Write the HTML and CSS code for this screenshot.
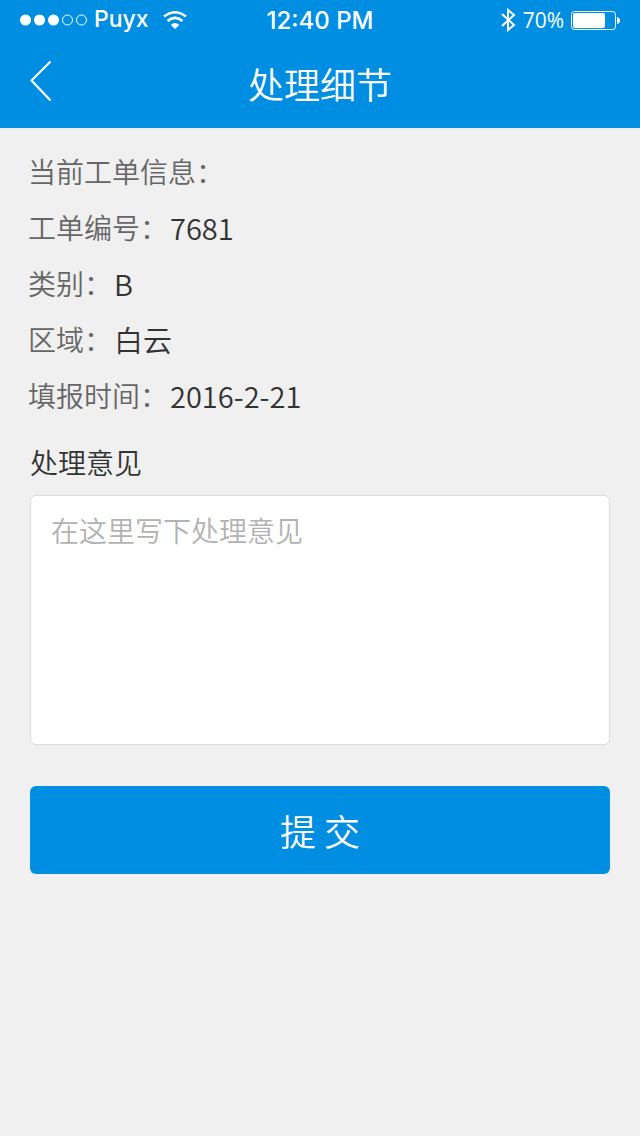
FILE: index.html
```html
<!DOCTYPE html>
<html lang="zh-CN">
<head>
<meta charset="utf-8">
<meta name="viewport" content="width=device-width, initial-scale=1">
<title>处理细节</title>
<link rel="stylesheet" href="styles.css">
</head>
<body>
<header class="top">
  <div class="status">
    <div class="status-left">
      <svg class="signal" width="68" height="12" viewBox="0 0 68 12" aria-hidden="true">
        <g fill="#fff"><circle cx="5.500" cy="6" r="5.500"/><circle cx="19.500" cy="6" r="5.500"/><circle cx="33.500" cy="6" r="5.500"/></g>
        <g fill="none" stroke="#fff"><circle cx="47.500" cy="6" r="5"/><circle cx="61.500" cy="6" r="5"/></g>
      </svg>
      <span class="carrier">Puyx</span>
      <svg class="wifi" width="24" height="18" viewBox="0 0 24 18" aria-hidden="true">
        <g fill="none" stroke="#fff" stroke-width="2.600"><path d="M1 5.500Q12-3 23 5.500"/><path d="M4.600 10Q12 3.800 19.400 10"/></g>
        <path d="M7.800 14Q12 10 16.200 14L12 18Z" fill="#fff"/>
      </svg>
    </div>
    <span class="clock">12:40 PM</span>
    <div class="status-right">
      <svg class="bluetooth" width="16" height="24" viewBox="0 0 16 24" aria-hidden="true"><path d="M1 6L13 17L7 22V2L13 7L1 18" fill="none" stroke="#fff" stroke-width="2"/></svg>
      <span class="percent">70%</span>
      <svg class="battery" width="50" height="20" viewBox="0 0 50 20" aria-hidden="true"><rect x="1.500" y="1.500" width="44" height="18" rx="3" fill="none" stroke="#fff"/><rect x="3" y="3" width="32" height="15" rx="2" fill="#fff"/><path d="M47 7Q50 8 50 10.500T47 14Z" fill="#fff"/></svg>
    </div>
  </div>
  <div class="nav">
    <button class="back" type="button" aria-label="返回"><svg width="22" height="42" viewBox="0 0 22 42" aria-hidden="true"><path d="M20.500 1.500L1.500 20.500L20.500 40.500" fill="none" stroke="#fff" stroke-width="2.200"/></svg></button>
    <h1 class="title">处理细节</h1>
  </div>
</header>
<main class="content">
  <h2 class="heading">当前工单信息：</h2>
  <dl class="info">
    <div class="row"><dt>工单编号：</dt><dd>7681</dd></div>
    <div class="row"><dt>类别：</dt><dd>B</dd></div>
    <div class="row"><dt>区域：</dt><dd>白云</dd></div>
    <div class="row"><dt>填报时间：</dt><dd>2016-2-21</dd></div>
  </dl>
  <form class="form">
    <label class="label" for="opinion">处理意见</label>
    <textarea class="opinion" id="opinion" placeholder="在这里写下处理意见"></textarea>
    <button class="submit" type="button">提 交</button>
  </form>
</main>
</body>
</html>
```
FILE: styles.css
```css
* { box-sizing: border-box; }
body {
  margin: 0;
  min-height: 100vh;
  background: #f0f0f0;
  color: #333;
  font-family: "Noto Sans CJK SC", sans-serif;
  font-weight: 350;
}
.top { background: #008ee3; color: #fff; }
.status {
  display: grid;
  grid-template-columns: 1fr auto 1fr;
  align-items: center;
  height: 40px;
  padding: 0 20px;
}
.status-left, .status-right { display: flex; align-items: center; gap: 6px; }
.status-right { justify-content: flex-end; }
.carrier { padding-bottom: 2px; font: 500 23px/36px Inter, sans-serif; }
.wifi { margin-left: 8px; }
.clock { padding-top: 2px; font: 500 24px/38px Inter, sans-serif; }
.percent { font: 400 21px/40px "Open Sans", sans-serif; }
.nav {
  display: grid;
  grid-template-columns: 60px 1fr 60px;
  align-items: center;
  height: 88px;
  padding: 0 20px 6px;
}
.back {
  display: flex;
  padding: 0 10px;
  border: 0;
  background: none;
}
.title { margin: 0; padding-top: 4px; text-align: center; font-size: 36px; font-weight: 350; line-height: 52px; }
.content { padding: 15px 28px; font-size: 28px; }
.heading { margin: 0; color: #666; font-size: 28px; font-weight: 350; line-height: 56px; }
.info { margin: 0; }
.row { display: flex; gap: 2px; line-height: 56px; }
.row dt { color: #666; }
.row dd { margin: 0; font-size: 29px; }
.form { display: flex; flex-direction: column; padding: 12px 2px; }
.label { margin-bottom: 6px; line-height: 54px; }
.opinion {
  height: 250px;
  margin-bottom: 41px;
  padding: 12px 20px;
  border: 1px solid #dcdcdc;
  border-radius: 6px;
  background: #fff;
  color: #333;
  font: 350 28px/44px "Noto Sans CJK SC", sans-serif;
  resize: none;
}
.opinion::placeholder { color: #b2b2b2; opacity: 1; }
.submit {
  height: 88px;
  padding: 0;
  border: 0;
  border-radius: 6px;
  background: #008ee3;
  color: #fff;
  font: 350 36px/52px "Noto Sans CJK SC", sans-serif;
}
```
